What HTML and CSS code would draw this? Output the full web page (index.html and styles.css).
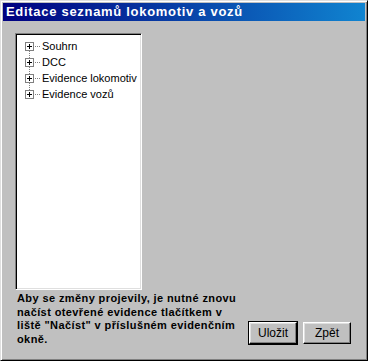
FILE: index.html
```html
<!DOCTYPE html>
<html lang="cs">
<head>
    <meta charset="UTF-8">
    <title>Editace seznamů lokomotiv a vozů</title>
    <link rel="stylesheet" href="styles.css">
</head>
<body>
<div class="window">
    <div class="title-bar">Editace seznamů lokomotiv a vozů</div>

    <div class="content">
        <div class="tree">
            <div class="tree-item"><span class="expander"></span><span class="dots"></span>Souhrn</div>
            <div class="tree-item"><span class="expander"></span><span class="dots"></span>DCC</div>
            <div class="tree-item"><span class="expander"></span><span class="dots"></span>Evidence lokomotiv</div>
            <div class="tree-item last"><span class="expander"></span><span class="dots"></span>Evidence vozů</div>
        </div>

        <div class="footer">
            <p class="note">Aby se změny projevily, je nutné znovu<br>načíst otevřené evidence tlačítkem v<br>liště "Načíst" v příslušném evidenčním<br>okně.</p>
            <div class="buttons">
                <button type="button" class="btn default">Uložit</button>
                <button type="button" class="btn">Zpět</button>
            </div>
        </div>
    </div>
</div>
</body>
</html>
```

FILE: styles.css
```css
* {
    margin: 0;
    padding: 0;
    box-sizing: border-box;
}

body {
    width: 368px;
    height: 361px;
    background: #c0c0c0;
    font-family: "Liberation Sans", Arial, sans-serif;
    overflow: hidden;
}

.window {
    width: 368px;
    height: 361px;
    background: #c0c0c0;
    border: 1px solid;
    border-color: #dfdfdf #000 #000 #dfdfdf;
    box-shadow: inset 1px 1px 0 #fff, inset -1px -1px 0 #808080;
    padding: 2px;
    display: flex;
    flex-direction: column;
}

.title-bar {
    height: 18px;
    background: linear-gradient(90deg, #000080 0%, #1084d0 100%);
    color: #fff;
    font-weight: bold;
    font-size: 13px;
    line-height: 18px;
    padding-left: 3px;
    letter-spacing: 0.7px;
    white-space: nowrap;
}

.content {
    flex: 1;
    display: flex;
    flex-direction: column;
    padding: 12px 0 0 12px;
}

.tree {
    width: 127px;
    height: 257px;
    background: #fff;
    border: 1px solid;
    border-color: #808080 #fff #fff #808080;
    box-shadow: inset 1px 1px 0 #000, inset -1px -1px 0 #dfdfdf;
    padding: 4px 0 0 9px;
    font-size: 11px;
    color: #000;
}

.tree-item {
    position: relative;
    height: 16px;
    line-height: 16px;
    display: flex;
    align-items: center;
}

.tree-item::before {
    content: "";
    position: absolute;
    left: 4px;
    top: 12px;
    height: 8px;
    border-left: 1px dotted #808080;
}

.tree-item.last::before {
    display: none;
}

.expander {
    position: relative;
    width: 9px;
    height: 9px;
    border: 1px solid #808080;
    background: #fff;
    flex-shrink: 0;
    z-index: 1;
}

.expander::before,
.expander::after {
    content: "";
    position: absolute;
    background: #000;
}

.expander::before {
    left: 1px;
    top: 3px;
    width: 5px;
    height: 1px;
}

.expander::after {
    left: 3px;
    top: 1px;
    width: 1px;
    height: 5px;
}

.dots {
    width: 5px;
    margin: 0 2px 0 1px;
    border-top: 1px dotted #808080;
}

.footer {
    display: flex;
    align-items: flex-end;
    padding-top: 2px;
}

.note {
    width: 230px;
    font-size: 11px;
    font-weight: bold;
    line-height: 13.5px;
    letter-spacing: 0.4px;
    white-space: nowrap;
    color: #000;
    padding-left: 2px;
}

.buttons {
    display: flex;
    gap: 6px;
    margin-left: 4px;
    margin-bottom: 2px;
}

.btn {
    width: 48px;
    height: 22px;
    background: #c0c0c0;
    font-family: "Liberation Sans", Arial, sans-serif;
    font-size: 12px;
    color: #000;
    border: 1px solid;
    border-color: #fff #000 #000 #fff;
    box-shadow: inset -1px -1px 0 #808080, inset 1px 1px 0 #dfdfdf;
}

.btn.default {
    outline: 1px solid #000;
}
```
